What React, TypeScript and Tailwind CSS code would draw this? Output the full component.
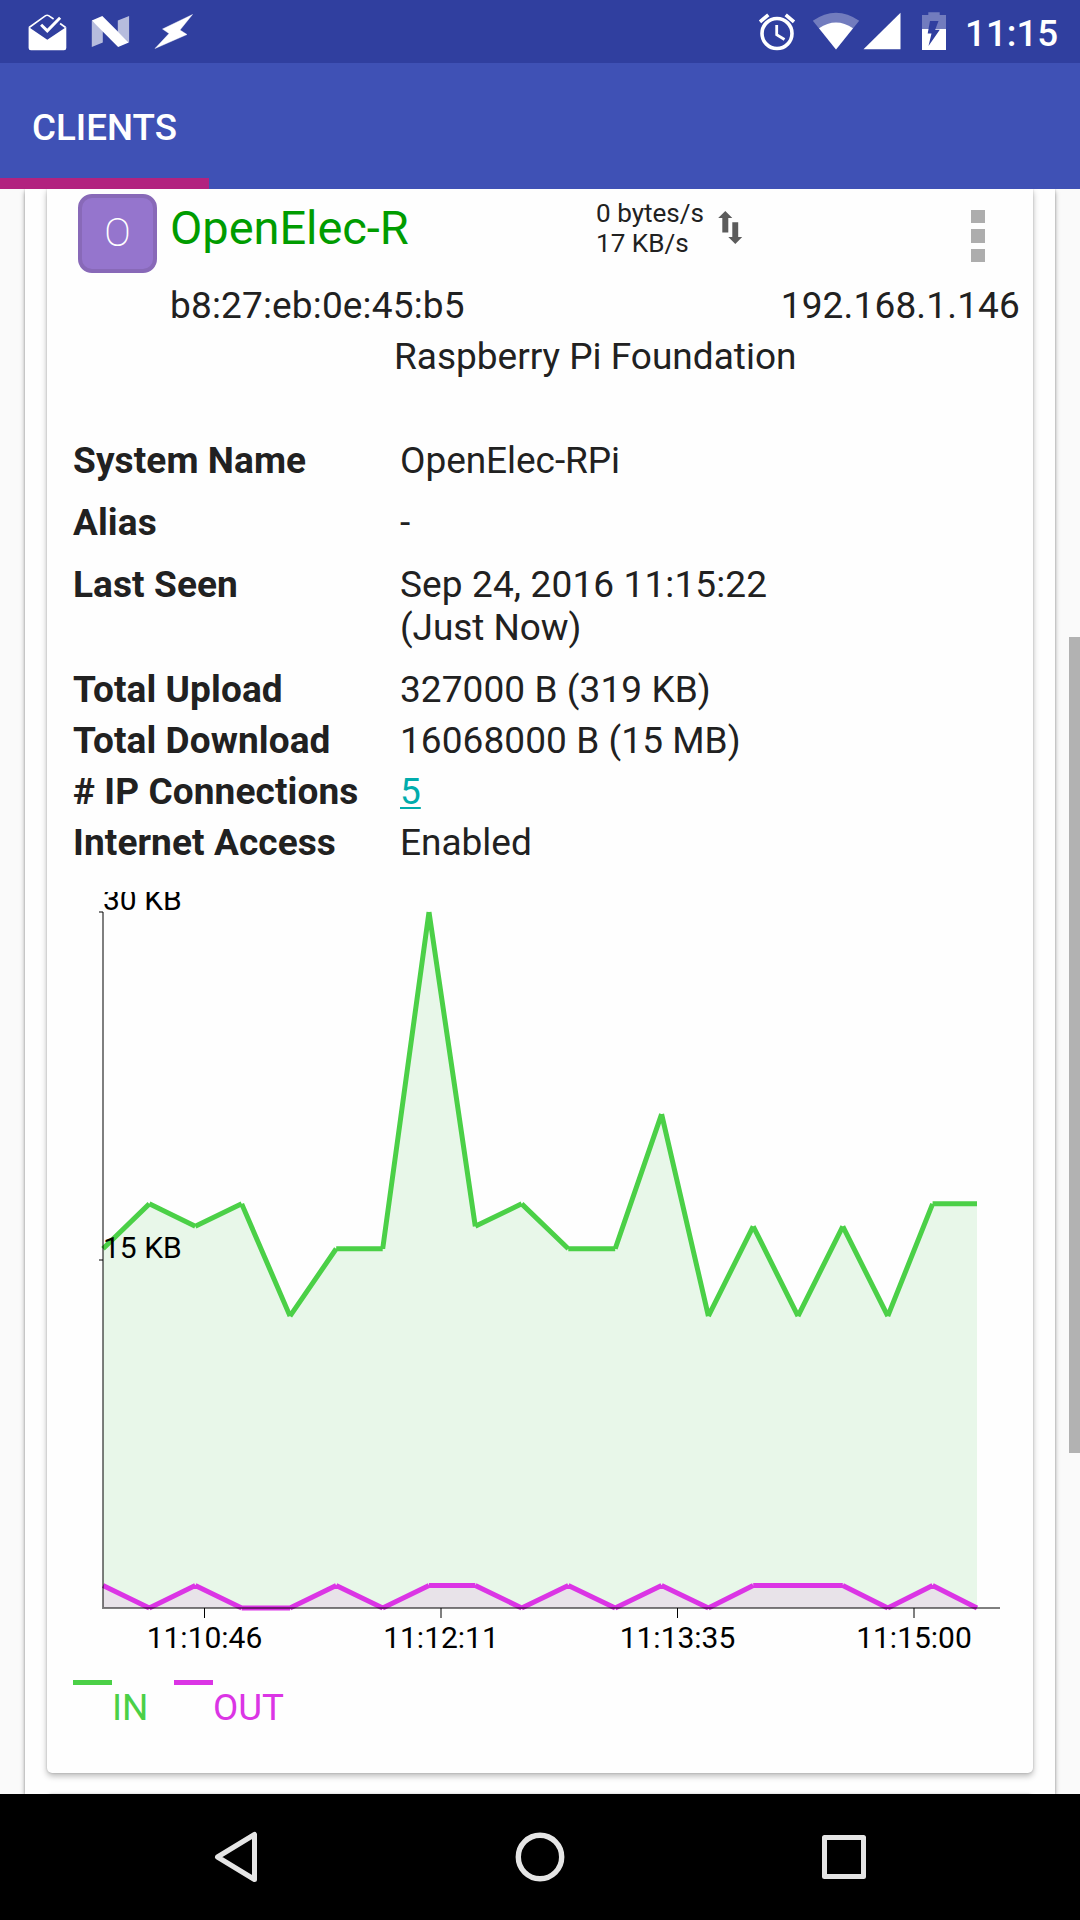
import React from "react";

const samples = [
  { x: 30, in: 16, out: 1 },
  { x: 76.3, in: 18, out: 0 },
  { x: 122.3, in: 17, out: 1 },
  { x: 168.7, in: 18, out: 0 },
  { x: 217, in: 13, out: 0 },
  { x: 263.2, in: 16, out: 1 },
  { x: 309.7, in: 16, out: 0 },
  { x: 356, in: 31, out: 1 },
  { x: 402.3, in: 17, out: 1 },
  { x: 448.7, in: 18, out: 0 },
  { x: 495.3, in: 16, out: 1 },
  { x: 542.2, in: 16, out: 0 },
  { x: 588.6, in: 22, out: 1 },
  { x: 635.4, in: 13, out: 0 },
  { x: 680.2, in: 17, out: 1 },
  { x: 725, in: 13, out: 1 },
  { x: 769.8, in: 17, out: 1 },
  { x: 814.8, in: 13, out: 0 },
  { x: 859.6, in: 18, out: 1 },
  { x: 904, in: 18, out: 0 },
];

const xTicks = [
  { x: 131.5, label: "11:10:46" },
  { x: 368, label: "11:12:11" },
  { x: 604.5, label: "11:13:35" },
  { x: 841, label: "11:15:00" },
];

const BASE = 716;
const yOf = (v: number) => BASE - (v * 696) / 31;

function segments(key: "in" | "out") {
  return samples
    .slice(1)
    .map((s, i) => `M${samples[i].x} ${yOf(samples[i][key])}L${s.x} ${yOf(s[key])}`)
    .join("");
}

function area(key: "in" | "out") {
  return `M30 ${BASE}` + samples.map((s) => `L${s.x} ${yOf(s[key])}`).join("") + `L904 ${BASE}Z`;
}

function Chart() {
  return (
    <svg className="block h-[768px] w-[940px] overflow-hidden" viewBox="0 0 940 768" fontFamily="Roboto, sans-serif" fontSize="30">
      <path d={area("in")} fill="#e8f7e9" />
      <path d={segments("in")} stroke="#4bd047" strokeWidth="5" fill="none" />
      <path d={area("out")} fill="#e8e3e9" />
      <path d={segments("out")} stroke="#db35e5" strokeWidth="5" fill="none" />
      <path d="M30 20V716H927" stroke="#000" strokeOpacity="0.5" strokeWidth="2" fill="none" />
      <path d="M26 20H30M26 368H30" stroke="#000" strokeOpacity="0.5" strokeWidth="2" />
      <text x="30" y="18">30 KB</text>
      <text x="30" y="366">15 KB</text>
      {xTicks.map((t) => (
        <g key={t.label}>
          <path d={`M${t.x} 716V726`} stroke="#000" strokeWidth="1" />
          <text x={t.x} y="756" textAnchor="middle">{t.label}</text>
        </g>
      ))}
    </svg>
  );
}

function StatusBar() {
  return (
    <div className="flex h-[63px] shrink-0 items-start justify-between bg-[#303f9f] text-white">
      <div className="flex gap-[22px] pl-[27px]">
        <svg className="h-[63px] w-[41px]" viewBox="27.4 0 41 63">
          <path d="M29.500 27.500 46 15.600Q47.500 14.800 49 15.600L54 19M60.500 23.500 66 27.500" stroke="#fff" strokeWidth="1.600" fill="none" />
          <path d="M29 27 47.700 39.800 66.700 27V48Q66.700 50.300 64.400 50.300H31.300Q29 50.300 29 48Z" fill="#fff" />
          <path d="M41.500 24.700 47.700 30.800 60.500 17.800" stroke="#fff" strokeWidth="3" fill="none" />
        </svg>
        <svg className="h-[63px] w-[42px]" viewBox="90.2 0 42 63">
          <path d="M92 20.500 103 30V42.500L92 47ZM129.300 16 118 20.500V32L129.300 42.500Z" fill="#fff" fillOpacity="0.65" />
          <path d="M92 20.500 102.500 16 129 42.500 118.300 47Z" fill="#fff" />
        </svg>
        <svg className="h-[63px] w-[44px]" viewBox="154 0 44 63">
          <path d="M192.500 14.500 162.500 29 169 33.500 155 48.500 187 34.500 180 30Z" fill="#fff" stroke="#fff" strokeOpacity="0.4" strokeWidth="1" style={{ filter: "blur(0.7px)" }} />
        </svg>
      </div>
      <div className="flex pr-[21px]">
        <svg className="h-[63px] w-[192px]" viewBox="756 0 192 63">
          <circle cx="777" cy="33.500" r="15" stroke="#fff" strokeWidth="3.600" fill="none" />
          <path d="M776.700 25V34.700L784.500 39.500" stroke="#fff" strokeWidth="2.800" fill="none" />
          <path d="M760 21.800 768.300 14.800M785.700 14.800 794 21.800" stroke="#fff" strokeWidth="3.600" />
          <path d="M812.800 20.800Q836 4.800 859.200 20.800L836 49.500Z" fill="#fff" fillOpacity="0.32" />
          <path d="M819 28.300Q836 16.700 853 28.300L836 49.500Z" fill="#fff" />
          <path d="M900.500 12.800V49.300H863.500Z" fill="#fff" />
          <path d="M922 15H928.300V12.300H939.700V15H946V29H922Z" fill="#fff" fillOpacity="0.32" />
          <path d="M922 29H946V50H922Z" fill="#fff" />
          <path d="M930 21H938.500L935.200 29.800H939.800L928.500 46 931.500 33.500H927.700Z" fill="#303f9f" />
        </svg>
        <div className="ml-[17px] w-[94px] whitespace-nowrap pt-[12px] text-[36.75px] font-medium leading-[43px]">11:15</div>
      </div>
    </div>
  );
}

const details: { label: string; value: React.ReactNode; className: string }[] = [
  { label: "System Name", value: <span className="tracking-[-0.05px]">OpenElec-RPi</span>, className: "mb-[19px]" },
  { label: "Alias", value: "-", className: "mb-[19px]" },
  {
    label: "Last Seen",
    value: (
      <>
        <span className="tracking-[0.12px]">Sep 24, 2016 11:15:22</span>
        <br />
        <span className="tracking-[-0.08px]">(Just Now)</span>
      </>
    ),
    className: "mb-[19px]",
  },
  { label: "Total Upload", value: <span className="tracking-[0.07px]">327000 B (319 KB)</span>, className: "mb-[8px]" },
  { label: "Total Download", value: <span className="tracking-[0.07px]">16068000 B (15 MB)</span>, className: "mb-[8px]" },
  {
    label: "# IP Connections",
    value: <span className="text-[#00acac] underline decoration-2 underline-offset-[3px]">5</span>,
    className: "mb-[8px]",
  },
  { label: "Internet Access", value: "Enabled", className: "" },
];

function NavBar() {
  return (
    <div className="flex h-[126px] shrink-0 items-center justify-center bg-black">
      <svg className="h-[126px] w-[660px]" viewBox="210 1794 660 126" fill="none" stroke="#e5e5e5" strokeLinejoin="round">
        <path d="M254.500 1834.500V1879.500L217.500 1857Z" strokeWidth="5" />
        <circle cx="540" cy="1857" r="21.700" strokeWidth="5.400" />
        <rect x="824.500" y="1837.500" width="39" height="39" strokeWidth="5" />
      </svg>
    </div>
  );
}

export default function App() {
  return (
    <div className="flex h-[1920px] w-[1080px] flex-col overflow-hidden bg-[#fafafa] font-['Roboto',sans-serif] text-[37px] leading-[43px] text-[#212121] antialiased">
      <StatusBar />
      <div className="relative flex h-[126px] shrink-0 items-center bg-[#3f51b5] pl-[32px] pt-[2px] text-[36.75px] font-medium text-white">
        CLIENTS
        <div className="absolute bottom-0 left-0 h-[11px] w-[209px] bg-[#b2227f]" />
      </div>
      <div className="relative flex min-h-0 flex-1 flex-col overflow-hidden px-[25px]">
        <div className="min-h-0 flex-1 bg-[#fefefe] px-[22px] shadow-[0_3px_5px_rgba(0,0,0,0.36),0_0_2px_rgba(0,0,0,0.2)]">
          <div className="h-[1584px] rounded-b-[5px] bg-[#fefefe] pl-[26px] shadow-[0_3px_6px_rgba(0,0,0,0.28),0_0_2px_rgba(0,0,0,0.2)]">
            <div className="flex h-[95px] items-start">
              <div className="ml-[5px] mt-[5px] flex size-[79px] items-center justify-center rounded-[14px] border-4 border-[#8869b8] bg-[#9575cd] pb-[2px] text-[39.5px] font-extralight text-white">
                O
              </div>
              <div className="ml-[13px] mt-[11px] w-[426px] text-[47px] leading-[56px] tracking-[-0.05px] text-[#009c00]">OpenElec-R</div>
              <div className="mt-[9px] w-[118px] whitespace-nowrap text-[26.1px] leading-[30px]">
                0 bytes/s
                <br />
                17 KB/s
              </div>
              <svg className="ml-[3px] mt-[21px] h-[36px] w-[26px]" viewBox="717 210 26 36" fill="#5c5c5c">
                <path d="M725.300 211 732.300 218H728.300V232.500H722.300V218H718.200Z" />
                <path d="M735.300 244 728.300 237H732.300V222.300H738.200V237H742.200Z" />
              </svg>
              <div className="ml-[228px] mt-[20.5px] flex flex-col gap-[6px]">
                <div className="h-[13.5px] w-[14px] bg-[#adadad]" />
                <div className="h-[13.5px] w-[14px] bg-[#adadad]" />
                <div className="h-[13.5px] w-[14px] bg-[#adadad]" />
              </div>
            </div>
            <div className="flex h-[51px] items-center justify-between pb-[8px] pl-[97px] pr-[13px] tracking-[0.16px]">
              <span>b8:27:eb:0e:45:b5</span>
              <span>192.168.1.146</span>
            </div>
            <div className="pl-[321px]">Raspberry Pi Foundation</div>
            <div className="mt-[61px]">
              {details.map((d) => (
                <div key={d.label} className={`flex ${d.className}`}>
                  <div className="w-[327px] shrink-0 font-bold tracking-[0.1px]">{d.label}</div>
                  <div>{d.value}</div>
                </div>
              ))}
            </div>
            <div className="mt-[28px]">
              <Chart />
            </div>
            <div className="mt-[20px] flex items-start">
              <div className="h-[5px] w-[39px] bg-[#4bd047]" />
              <div className="mt-[6px] w-[62px] text-[#4bd047]">IN</div>
              <div className="h-[5px] w-[39px] bg-[#db35e5]" />
              <div className="mt-[6px] text-[36.75px] text-[#db35e5]">OUT</div>
            </div>
          </div>
          <div className="mt-[21px] h-[40px] rounded-t-[5px] bg-[#fefefe] shadow-[0_3px_6px_rgba(0,0,0,0.28),0_0_2px_rgba(0,0,0,0.2)]" />
        </div>
        <div className="absolute right-0 top-[448px] h-[816px] w-[11px] bg-[#b2b2b2]" />
      </div>
      <NavBar />
    </div>
  );
}
